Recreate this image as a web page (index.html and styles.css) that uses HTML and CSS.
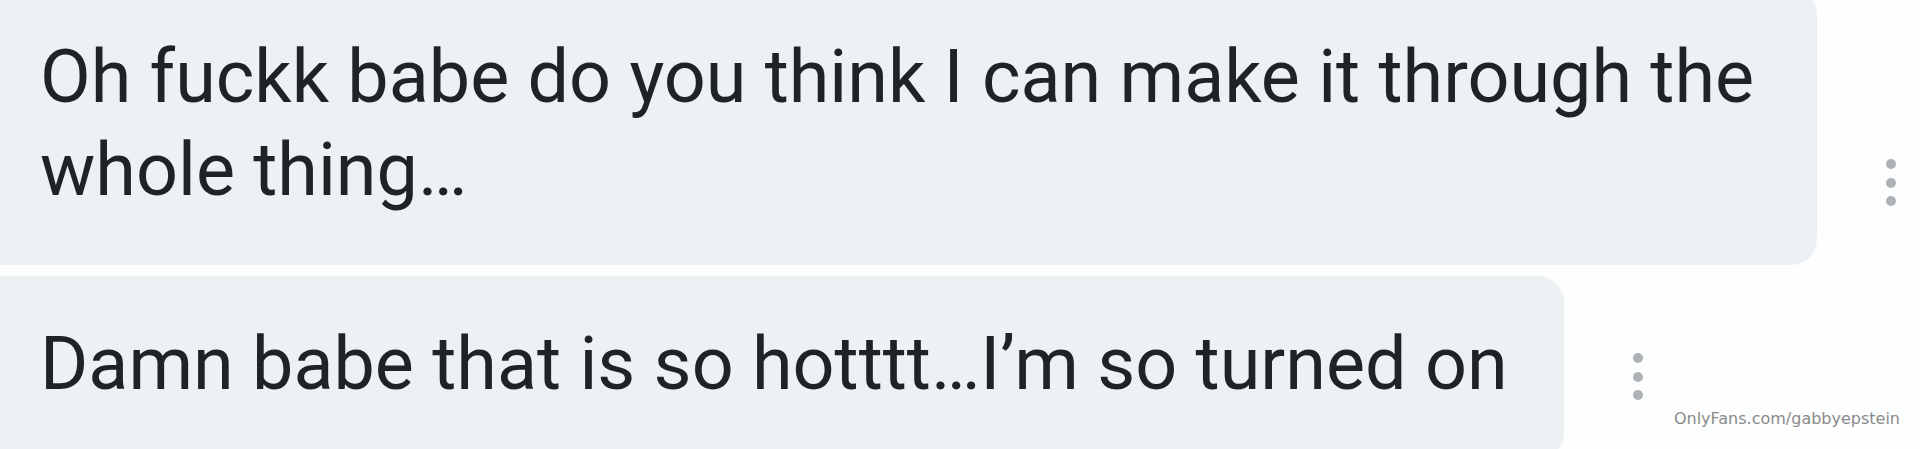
FILE: index.html
```html
<!DOCTYPE html>
<html lang="en">
<head>
<meta charset="utf-8">
<title>Chat</title>
<link rel="stylesheet" href="styles.css">
</head>
<body>
<div class="screen">
  <div class="chat">
    <div class="row row-first">
      <div class="bubble">Oh fuckk babe do you think I can make it through the whole thing…</div>
      <div class="more more-bottom"><span></span><span></span><span></span></div>
    </div>
    <div class="row">
      <div class="bubble">Damn babe that is so hotttt…I’m so turned on</div>
      <div class="more more-top"><span></span><span></span><span></span></div>
    </div>
  </div>
  <div class="watermark">OnlyFans.com/gabbyepstein</div>
</div>
</body>
</html>
```

FILE: styles.css
```css
html, body {
  margin: 0;
  padding: 0;
  background: #ffffff;
}

.screen {
  position: relative;
  width: 1920px;
  height: 449px;
  overflow: hidden;
  background: #fdfefe;
}

.chat {
  display: flex;
  flex-direction: column;
  gap: 11px;
  margin: -11px 0 0 -30px;
}

.row {
  display: flex;
  align-items: flex-start;
  gap: 69px;
  padding-right: 24px;
}

.bubble {
  flex: 0 1 auto;
  background: #eef1f3;
  border-radius: 26px;
  padding: 42px 56px 48px 70px;
  font-family: Roboto, "Noto Sans", sans-serif;
  font-size: 73.7px;
  line-height: 93px;
  color: #1f2326;
}

.more {
  flex: 0 0 10px;
  display: flex;
  flex-direction: column;
  gap: 8.5px;
}

.more span {
  display: block;
  width: 10px;
  height: 10px;
  border-radius: 50%;
  background: #aeb2b7;
}

.more-bottom {
  align-self: flex-end;
  margin-bottom: 59px;
}

.more-top {
  margin-top: 77px;
}

.watermark {
  position: absolute;
  right: 20px;
  bottom: 22px;
  font-family: "DejaVu Sans", sans-serif;
  font-size: 16px;
  line-height: 16px;
  color: #8a8a8a;
}
```
